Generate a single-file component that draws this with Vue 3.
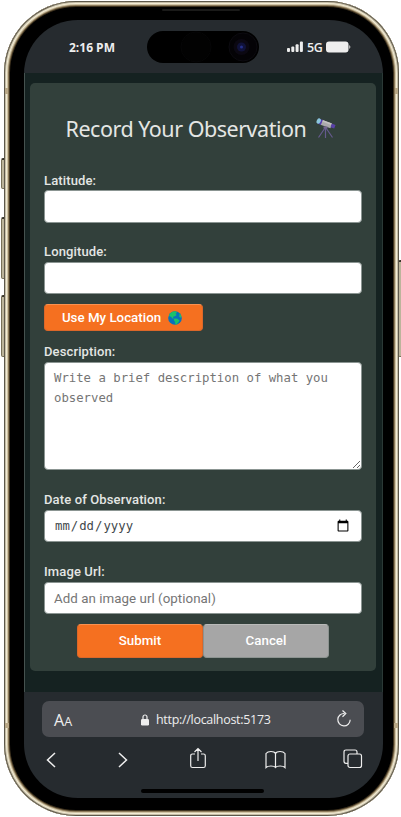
<script setup>
import { ref } from 'vue'

const latitude = ref('')
const longitude = ref('')
const description = ref('')
const date = ref('')
const imageUrl = ref('')
</script>

<template>
  <div class="stage">
    <i class="key mute"></i>
    <i class="key up"></i>
    <i class="key down"></i>
    <i class="key power"></i>
    <div class="phone">
      <i class="band b1"></i><i class="band b2"></i><i class="band b3"></i><i class="band b4"></i>
      <i class="speaker"></i>
      <div class="screen">
        <header class="status">
          <span class="time">2:16 PM</span>
          <div class="island">
            <svg width="112" height="32" viewBox="0 0 112 32">
              <circle cx="49" cy="16" r="15" fill="#020202" stroke="#060607" />
              <circle cx="96" cy="16" r="14" fill="#040306" stroke="#0c0b10" />
              <circle cx="94.500" cy="16" r="8" fill="#0b0812" />
              <circle cx="94.500" cy="16" r="4.500" fill="#10123a" />
              <circle cx="94.500" cy="16" r="1.500" fill="#25308a" />
            </svg>
          </div>
          <div class="signals">
            <svg width="17" height="12" viewBox="0 0 17 12" fill="#ececec">
              <rect x="0" y="7" width="3" height="4" rx="1" />
              <rect x="4.300" y="5.500" width="3" height="5.500" rx="1" />
              <rect x="8.600" y="3.200" width="3" height="7.800" rx="1" />
              <rect x="12.900" y="0.500" width="3" height="10.500" rx="1" />
            </svg>
            <span class="net">5G</span>
            <svg width="26" height="12" viewBox="0 0 26 12">
              <rect x="0" y="0.500" width="22.500" height="11" rx="3" fill="#eee" />
              <path d="M23 4q3 2 0 4z" fill="#aaa" />
            </svg>
          </div>
        </header>

        <main class="page">
          <form class="card" @submit.prevent>
            <h1>
              <span>Record Your Observation</span>
              <svg width="20" height="21" viewBox="0 0 20 21">
                <path d="M9.500 9v11M9 10L2.500 19.500M10 10l6.500 9.500" stroke="#655a8e" stroke-width="1.200" fill="none" />
                <path d="M6 1.800L16 5.500 14.500 10.300 4.500 6.800z" fill="#aaa9ab" />
                <path d="M6.500 2l9.500 3.500-.6 1.500-9.500-3.500z" fill="#c3c1c2" />
                <path d="M2.500.5l4.300 1.500-2 5L1 5z" fill="#543eb0" />
                <ellipse cx="2.700" cy="3" rx="2" ry="2.800" transform="rotate(25 2.700 3)" fill="#8bc7dc" />
                <path d="M15.800 5.600l3.700 1.500-1.300 3.500-3.600-1.400z" fill="#5941a7" />
                <path d="M7.500 8.500h4v2h-4z" fill="#74668f" />
              </svg>
            </h1>
            <label for="lat">Latitude:</label>
            <input id="lat" v-model="latitude" type="text" />
            <label for="lng">Longitude:</label>
            <input id="lng" v-model="longitude" type="text" />
            <button type="button" class="btn locate">
              <span>Use My Location</span>
              <svg width="14" height="14" viewBox="0 0 14 14">
                <circle cx="7" cy="7" r="6.800" fill="#0871bb" />
                <path d="M2 2.500Q4.500.200 7.500.300L9 1.500 7.600 2.800 8.600 4 7 5.200 5.500 5.400 5 7 6.500 7.600 4.500 7.500 3 5.800 1.700 5.500 1 4.500z" fill="#1ac26a" />
                <path d="M6.500 7.500l2.800.2 2.300 1.700-1.300 2.200-1.800 2-1.200-.1-.2-2.500L5.700 9z" fill="#1ac26a" />
                <path d="M11 2l1.600 1.500.9 2.500-1 .8-1.500-1.500.6-1.300z" fill="#1ac26a" />
              </svg>
            </button>
            <label for="desc">Description:</label>
            <textarea id="desc" v-model="description" placeholder="Write a brief description of what you observed"></textarea>
            <label for="date">Date of Observation:</label>
            <input id="date" v-model="date" type="date" />
            <label for="img">Image Url:</label>
            <input id="img" v-model="imageUrl" type="text" placeholder="Add an image url (optional)" />
            <div class="actions">
              <button type="submit" class="btn">Submit</button>
              <button type="button" class="btn cancel">Cancel</button>
            </div>
          </form>
        </main>

        <footer class="browser">
          <div class="address">
            <span class="aa">A<small>A</small></span>
            <span class="url">
              <svg width="8" height="12" viewBox="0 0 8 12">
                <path d="M2 5V3a2 2 0 0 1 4 0v2" fill="none" stroke="#eee" stroke-width="1.200" />
                <rect y="5" width="8" height="6.500" rx="1.200" fill="#eee" />
              </svg>
              <span>http://localhost:5173</span>
            </span>
            <svg width="16" height="18" viewBox="0 0 16 18" fill="none" stroke="#eee" stroke-width="1.200">
              <path d="M8.500 3.500A6.200 6.200 0 1 0 14.200 9.800M6.500.5l3.300 3-3.300 3.200" />
            </svg>
          </div>
          <nav class="tools">
            <svg width="10" height="16" viewBox="0 0 10 16"><path d="M9 1L1.500 8 9 15" stroke-width="1.500" /></svg>
            <svg class="forward" width="10" height="16" viewBox="0 0 10 16"><path d="M1 1l7.500 7L1 15" stroke-width="1.500" /></svg>
            <svg class="share" width="16" height="22" viewBox="0 0 16 22"><path d="M5 7H2.500Q.7 7 .7 8.800v9.900q0 1.800 1.800 1.800h11q1.800 0 1.800-1.800V8.800Q15.300 7 13.500 7H11M8 14V1.500M4.500 5L8 1.500 11.500 5" /></svg>
            <svg class="book" width="21" height="20" viewBox="0 0 21 20"><path d="M10.500 17.500V3.500Q9.500 1.500 6 1.500T1 3.500v14Q2.500 16 6 16t4.500 1.500Q11.500 16 15 16t5 1.500v-14Q18.500 1.500 15 1.500t-4.500 2" /></svg>
            <svg class="tabs" width="20" height="20" viewBox="0 0 20 20"><path d="M5 14.300H3q-2 0-2-2V3q0-2 2-2h9q2 0 2 2v2" /><rect x="5" y="5" width="13.500" height="13.500" rx="2" /></svg>
          </nav>
          <div class="home"></div>
        </footer>
      </div>
    </div>
  </div>
</template>

<style>
body { margin: 0; background: #fff; overflow: hidden; }
</style>

<style scoped>
* { box-sizing: border-box; }
svg { display: block; flex: none; }
.stage { position: relative; width: 401px; height: 817px; padding: 1px 2px 1px 4px; overflow: hidden; }
.key { position: absolute; width: 5px; border: 1px solid #777058; border-top: 2px solid #38342a; background: #bcb49b; border-radius: 2px; }
.mute { left: 1px; top: 158px; height: 31px; }
.up { left: 1px; top: 217px; height: 62px; }
.down { left: 1px; top: 295px; height: 62px; }
.power { left: 398px; top: 260px; height: 97px; }
.phone {
  position: relative; width: 395px; height: 815px; padding: 19px 16px 18px 20px; border-radius: 72px; background: #000;
  box-shadow: inset 0 0 0 1px #5d584b, inset 0 0 0 2px #c5bda6, inset 0 0 0 3px #f3ecd5, inset 0 0 0 4px #cfc3a5, inset 0 0 0 5px #8d7b5b, inset 0 0 0 6px #3f331f;
}
.band { position: absolute; background: #b9a887; }
.b1 { left: 1px; top: 87px; width: 3px; height: 6px; }
.b2 { right: 1px; top: 87px; width: 3px; height: 6px; }
.b3 { left: 1px; bottom: 88px; width: 4px; height: 5px; }
.b4 { right: 1px; bottom: 88px; width: 4px; height: 5px; }
.speaker { position: absolute; left: 158px; top: 8px; width: 78px; height: 2px; border-radius: 1px; background: #1a1a19; }
.screen { width: 359px; height: 778px; display: flex; flex-direction: column; overflow: hidden; border-radius: 54px; background: #262b2f; }
.status { height: 53px; flex: none; display: flex; align-items: flex-start; color: #eee; font: 700 12px/16px "Open Sans", sans-serif; }
.time { width: 78px; margin: 20px 0 0 45px; letter-spacing: 0; white-space: nowrap; }
.island { width: 112px; height: 32px; margin-top: 11px; border-radius: 16px; background: #000; overflow: hidden; flex: none; }
.signals { display: flex; align-items: center; margin: 20px 0 0 28px; gap: 3px; height: 14px; }
.net { font: 600 12.5px/14px "Open Sans", sans-serif; width: 16px; letter-spacing: -0.5px; padding-top: 2px; }
.page { height: 619px; flex: none; padding: 10px 7px 0 6px; background: #152221; border-left: 1px solid #45524f; border-right: 1px solid #2b3936; }
.card { height: 588px; margin-left: -1px; width: 346px; padding: 0 14px; border-radius: 5px; background: #32403b; display: flex; flex-direction: column; font-family: Roboto, sans-serif; }
h1 { height: 90px; flex: none; margin: 0; padding: 0 0 0 21.5px; display: flex; align-items: center; gap: 9px; color: #e4e6e4; font: 400 21.5px/28px "Noto Sans", sans-serif; letter-spacing: -0.48px; white-space: nowrap; }
h1 span { width: 241px; padding-top: 1px; }
label { height: 16px; margin: 0 0 2px; flex: none; color: #e4e6e4; font: 500 13px/16px Roboto, sans-serif; letter-spacing: 0.13px; }
h1 + label { margin-bottom: 1px; }
input, textarea { width: 318px; margin: 0 0 22px; padding: 0 9px; border: 1px solid #8b9592; border-radius: 4px; background: #fff; color: #42484b; font: 400 13.333px/20px Roboto, sans-serif; flex: none; outline: none; }
input { height: 32px; }
#lat { height: 33px; margin-bottom: 21px; }
input::placeholder, textarea::placeholder { color: #757575; opacity: 1; }
#lng, #img { margin-bottom: 10px; }
#img { padding-top: 1px; letter-spacing: 0.04px; }
textarea { height: 108px; padding: 5px 9px; font: 400 12.3px/20px "DejaVu Sans Mono", monospace; resize: vertical; }
#date { padding: 0 9px; font: 400 12.3px/20px "DejaVu Sans Mono", monospace; }
#date::-webkit-calendar-picker-indicator { width: 14px; height: 14px; }
.btn { width: 126px; height: 34px; padding: 0; border: 1px solid #dc6729; border-top-color: #fa914f; border-radius: 4px; background: #f57020; color: #fff; font: 500 13.333px/18px Roboto, sans-serif; }
.locate { width: 159px; height: 27px; flex: none; display: flex; align-items: center; justify-content: center; gap: 7px; padding-right: 3px; margin-bottom: 13px; }
.cancel { background: #a6a6a6; border-color: #8c9390; border-top-color: #b9bab9; }
.actions { display: flex; justify-content: center; }
.browser { flex: 1; display: flex; flex-direction: column; align-items: flex-start; padding: 9px 0 0 18px; color: #eee; }
.address { width: 322px; height: 36px; border-radius: 7px; background: #4b4d52; display: flex; align-items: center; justify-content: space-between; padding: 0 12px 0 12px; font: 400 12.5px/18px "Open Sans", sans-serif; }
.aa { width: 87px; font-size: 16px; padding-top: 3px; }
.aa small { font-size: 12.5px; }
.url { display: flex; gap: 7px; align-items: center; width: 144px; letter-spacing: -0.3px; white-space: nowrap; margin-right: auto; padding-top: 1px; }
.tools { width: 322px; height: 46px; padding-left: 4px; display: flex; align-items: center; }
.tools svg { fill: none; stroke: #eee; stroke-width: 1.2; }
.forward { margin-left: 62px; }
.share { margin: 0 0 4px 62px; }
.book { margin-left: 59px; }
.tabs { margin: 0 0 2px 57px; }
.home { width: 123px; height: 4px; margin: 6px 0 0 99px; border-radius: 2px; background: #000; }
</style>
